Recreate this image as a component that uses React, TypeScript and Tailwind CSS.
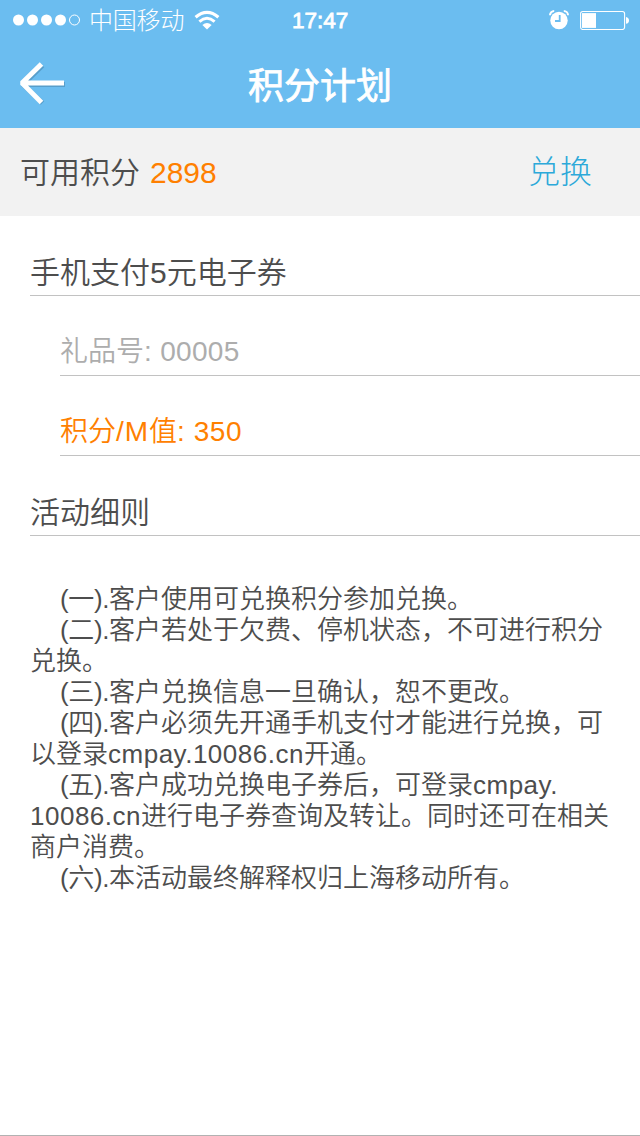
import type { ReactNode } from "react";

function StatusBar() {
  return (
    <div className="flex h-10 items-center pl-[13px] text-white">
      <svg width="68" height="12" viewBox="0 0 68 12" fill="currentColor">
        <circle cx="5.5" cy="6" r="5.5" />
        <circle cx="19.5" cy="6" r="5.5" />
        <circle cx="33.5" cy="6" r="5.5" />
        <circle cx="47.5" cy="6" r="5.5" />
        <circle cx="61.5" cy="6" r="5" fill="none" stroke="currentColor" strokeWidth="1" />
      </svg>
      <span className="ml-[8px] w-[105px] pt-[2px] text-[24px] leading-10 font-light tracking-[-0.2px] whitespace-nowrap">中国移动</span>
      <svg width="26" height="20" viewBox="0 0 26 20" fill="none" stroke="currentColor">
        <path d="M1.6 7.2 Q13 -2.6 24.4 7.2" strokeWidth="3.2" />
        <path d="M5.4 11.6 Q13 5 20.6 11.6" strokeWidth="3" />
        <path d="M8.4 15 Q13 11 17.600 15 L13 19.400 Z" fill="currentColor" stroke="none" />
      </svg>
      <span className="ml-[72px] pt-[2px] text-[22.5px] leading-10 [-webkit-text-stroke:0.8px_white]">17:47</span>
      <div className="flex-1" />
      <svg width="20" height="20" viewBox="0 0 20 20" fill="none">
        <path d="M1 5.2A4.2 4.2 0 0 1 5.2 1M14.8 1A4.2 4.2 0 0 1 19 5.2" stroke="white" strokeWidth="2" />
        <circle cx="10" cy="10.5" r="8.7" fill="white" />
        <path d="M10.7 5v6H6" stroke="#6bbdf0" strokeWidth="1.8" />
      </svg>
      <svg className="ml-[11px]" width="60" height="20" viewBox="0 0 60 20" fill="none">
        <rect x="0.6" y="1.5" width="44" height="18" rx="2.2" stroke="white" strokeWidth="1.1" />
        <rect x="2" y="3.1" width="14" height="14.8" fill="white" />
        <path d="M46 7q3 .8 3 3.4t-3 3.4z" fill="white" />
      </svg>
    </div>
  );
}

function Header() {
  return (
    <div className="grid h-[88px] grid-cols-[120px_1fr_120px] items-center text-white">
      <svg className="ml-[18px] -mt-[2px]" width="50" height="44" viewBox="0 0 50 44" fill="none">
        <g strokeWidth="5" strokeLinejoin="bevel">
          <path d="M24.5 4.5 5 23.5l19.5 18.5M6 23.5h41" stroke="#5296c2" opacity=".8" />
          <path d="M23.5 3 4 22l19.5 19.5M5 22h41" stroke="white" />
        </g>
      </svg>
      <h1 className="pt-[5px] text-center text-[36px] leading-[52px] font-normal [-webkit-text-stroke:0.8px_white]">积分计划</h1>
    </div>
  );
}

function Row({ className, children }: { className: string; children: ReactNode }) {
  return <div className={"flex h-20 items-end border-b border-[#c2c2c2] whitespace-nowrap " + className}>{children}</div>;
}

function Latin({ children }: { children: ReactNode }) {
  return <span className="tracking-[0.5px]">{children}</span>;
}

function Item({ no, children }: { no: string; children: ReactNode }) {
  return (
    <p>
      <span className="ml-[30px] tracking-[-0.4px]">({no}).</span>
      {children}
    </p>
  );
}

export default function App() {
  return (
    <div lang="zh-CN" className="flex h-[1136px] w-[640px] flex-col overflow-hidden border-b border-[#b2b2b2] bg-white font-['Liberation_Sans','Noto_Sans_CJK_SC',sans-serif] text-[#4d4d4d]">
      <header className="h-32 bg-[#6bbdf0]">
        <StatusBar />
        <Header />
      </header>
      <section className="flex h-[88px] items-center justify-between bg-[#f2f2f2] pt-[2px] pl-[20px] pr-[48px] font-[350]">
        <div className="text-[30px] leading-[44px]">
          可用积分<span className="ml-[10px] text-[#ff8000]">2898</span>
        </div>
        <button className="-mt-[2px] text-[32px] leading-[44px] font-light text-[#2ca9d9]">兑换</button>
      </section>
      <main className="font-[350]">
        <Row className="ml-[30px] text-[30px] leading-[44px]">手机支付5元电子券</Row>
        <Row className="ml-[60px] text-[28px] leading-[46px] text-[#adadad]">
          礼品号<span className="tracking-[0.3px] whitespace-pre">: 00005</span>
        </Row>
        <Row className="ml-[60px] text-[28px] leading-[46px] text-[#ff8000]">
          积分<span className="tracking-[0.9px]">/M</span>值<span className="tracking-[0.6px] whitespace-pre">: 350</span>
        </Row>
        <Row className="ml-[30px] text-[30px] leading-[44px]">活动细则</Row>
        <div className="mt-[48px] ml-[30px] text-[26px] leading-[31px] whitespace-nowrap">
          <Item no="一">客户使用可兑换积分参加兑换。</Item>
          <Item no="二">
            客户若处于欠费、停机状态，不可进行积分
            <br />
            兑换。
          </Item>
          <Item no="三">客户兑换信息一旦确认，恕不更改。</Item>
          <Item no="四">
            客户必须先开通手机支付才能进行兑换，可
            <br />
            以登录<Latin>cmpay.10086.cn</Latin>开通。
          </Item>
          <Item no="五">
            客户成功兑换电子券后，可登录<Latin>cmpay.</Latin>
            <br />
            <Latin>10086.cn</Latin>进行电子券查询及转让。同时还可在相关
            <br />
            商户消费。
          </Item>
          <Item no="六">本活动最终解释权归上海移动所有。</Item>
        </div>
      </main>
    </div>
  );
}
